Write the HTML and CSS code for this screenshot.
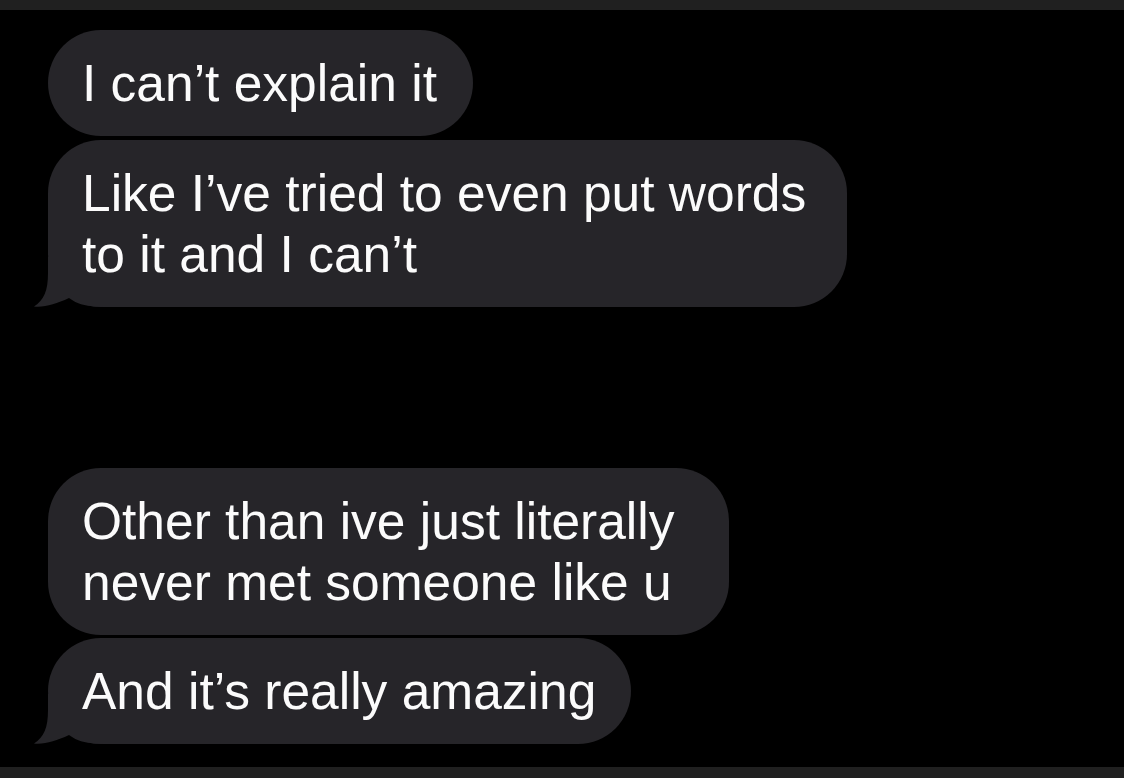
FILE: index.html
```html
<!DOCTYPE html>
<html lang="en">
<head>
<meta charset="utf-8">
<title>Messages</title>
<link rel="stylesheet" href="styles.css">
</head>
<body>
<div class="screen">
  <div class="bar bar-top"></div>
  <main class="thread">
    <div class="group">
      <div class="bubble pad-1"><span class="text">I can’t explain it</span></div>
      <div class="bubble pad-2">
        <svg class="tail-svg" viewBox="0 0 76 50" width="76" height="50" aria-hidden="true"><path d="M16,0 L16,16 C16,34 12,43 2,49.5 C13,50.5 24,47 37,41 C45,47 54,50 76,50 L76,0 Z"/></svg>
        <span class="text">Like I’ve tried to even put words<br>to it and I can’t</span>
      </div>
    </div>
    <div class="group group-second">
      <div class="bubble pad-3"><span class="text">Other than ive just literally<br>never met someone like u</span></div>
      <div class="bubble pad-4">
        <svg class="tail-svg" viewBox="0 0 76 50" width="76" height="50" aria-hidden="true"><path d="M16,0 L16,16 C16,34 12,43 2,49.5 C13,50.5 24,47 37,41 C45,47 54,50 76,50 L76,0 Z"/></svg>
        <span class="text">And it’s really amazing</span>
      </div>
    </div>
  </main>
  <div class="bar bar-bottom"></div>
</div>
</body>
</html>
```
FILE: styles.css
```css
html, body {
  margin: 0;
  padding: 0;
  background: #000;
}
.screen {
  width: 1124px;
  height: 778px;
  display: flex;
  flex-direction: column;
  background: #000;
  overflow: hidden;
}
.bar {
  background: #202020;
  flex: 0 0 auto;
}
.bar-top {
  height: 10px;
}
.bar-bottom {
  height: 11px;
}
.thread {
  flex: 1 1 auto;
  display: flex;
  flex-direction: column;
  padding: 20px 0 0 48px;
  gap: 161px;
}
.group {
  display: flex;
  flex-direction: column;
  align-items: flex-start;
  gap: 4px;
}
.group-second {
  gap: 3px;
}
.bubble {
  position: relative;
  background: #262529;
  color: #fbfbfb;
  font-family: "Liberation Sans", Arial, sans-serif;
  font-size: 51.5px;
  line-height: 61px;
  padding: 22.5px 38px 22.5px 34px;
  border-radius: 53px;
  white-space: nowrap;
}
.text {
  position: relative;
  z-index: 1;
}
.pad-1 {
  padding-right: 36px;
}
.pad-2 {
  padding-right: 41px;
}
.pad-3 {
  padding-right: 54px;
}
.pad-4 {
  padding-right: 35px;
}
.tail-svg {
  position: absolute;
  left: -16px;
  bottom: 0;
  z-index: 0;
  fill: #262529;
  display: block;
}
```
